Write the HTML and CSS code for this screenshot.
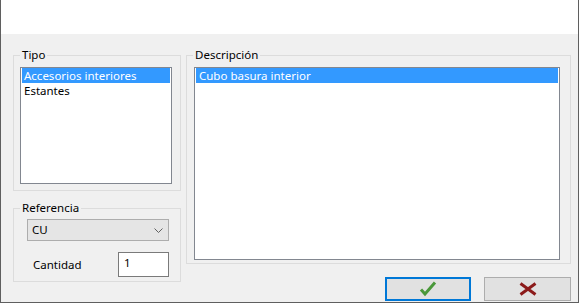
FILE: index.html
```html
<!DOCTYPE html>
<html>
<head>
<meta charset="utf-8">
<link rel="stylesheet" href="styles.css">
</head>
<body>
<div class="window">
  <div class="titlebar"></div>
  <div class="content">
    <div class="col-left">
      <div class="group group-tipo">
        <div class="group-title">Tipo</div>
        <div class="listbox list-tipo">
          <div class="item selected">Accesorios interiores</div>
          <div class="item">Estantes</div>
        </div>
      </div>
      <div class="group group-ref">
        <div class="group-title">Referencia</div>
        <div class="combo">
          <span class="combo-text">CU</span>
          <svg class="chevron" width="9" height="5" viewBox="0 0 9 5"><path d="M0.5 0.5 L4.5 4.5 L8.5 0.5" fill="none" stroke="#606060" stroke-width="1"/></svg>
        </div>
        <div class="qty-row">
          <span class="qty-label">Cantidad</span>
          <div class="textbox">1</div>
        </div>
      </div>
    </div>
    <div class="col-right">
      <div class="group group-desc">
        <div class="group-title">Descripción</div>
        <div class="listbox list-desc">
          <div class="item selected">Cubo basura interior</div>
        </div>
      </div>
      <div class="buttons">
        <button class="btn btn-ok" type="button">
          <svg width="18" height="16" viewBox="0 0 18 16"><path d="M2 8.5 L6 13 L16 1.5" fill="none" stroke="#4a983a" stroke-width="3"/></svg>
        </button>
        <button class="btn btn-cancel" type="button">
          <svg width="18" height="14" viewBox="0 0 18 14"><path d="M1.5 1.5 L16.5 12.5 M16.5 1.5 L1.5 12.5" fill="none" stroke="#8c1b1b" stroke-width="3"/></svg>
        </button>
      </div>
    </div>
  </div>
</div>
</body>
</html>
```
FILE: styles.css
```css
* { box-sizing: border-box; }
html, body { margin: 0; padding: 0; background: #ffffff; }
body {
  font-family: "Noto Sans", "Open Sans", "DejaVu Sans", sans-serif;
  font-size: 11.5px;
  color: #000;
}
.window {
  width: 579px;
  height: 303px;
  border: 1px solid #5f5f5f;
  border-top: none;
  background: #f0f0f0;
  display: flex;
  flex-direction: column;
}
.titlebar {
  height: 34px;
  background: #ffffff;
  flex: none;
}
.content {
  display: flex;
  gap: 5px;
  padding: 21px 7px 0 12px;
}
.col-left {
  width: 168px;
  display: flex;
  flex-direction: column;
  gap: 17px;
}
.col-right {
  width: 385px;
  display: flex;
  flex-direction: column;
}
.group {
  border: 1px solid #dcdcdc;
}
.group-title {
  margin: -9px 0 0 6px;
  padding: 0 2px 0 2px;
  height: 16px;
  line-height: 16px;
  background: #f0f0f0;
  width: fit-content;
}
.group-tipo {
  height: 136px;
  padding: 0 0 6px 0;
}
.listbox {
  background: #fff;
  border: 1px solid #828790;
  padding: 0 1px;
  margin-top: 4px;
}
.list-tipo {
  width: 152px;
  height: 117px;
  margin-left: 6px;
}
.item {
  height: 15px;
  line-height: 15px;
  padding-left: 2px;
  white-space: nowrap;
}
.item.selected {
  background: #3399ff;
  color: #fff;
}
.group-ref {
  height: 74px;
  padding: 0 11px 4px 13px;
  padding-left: 0;
}
.combo {
  margin: 3px 0 0 13px;
  width: 142px;
  height: 22px;
  background: #e5e5e5;
  border: 1px solid #adadad;
  display: flex;
  align-items: center;
  justify-content: space-between;
  padding: 0 5px 0 4px;
}
.combo-text { line-height: 16px; }
.chevron { display: block; margin-top: 1px; }
.qty-row {
  margin: 11px 0 0 13px;
  width: 142px;
  display: flex;
  align-items: center;
  padding-left: 6px;
}
.qty-label { line-height: 16px; }
.textbox {
  margin-left: auto;
  width: 51px;
  height: 25px;
  background: #fff;
  border: 1px solid #7a7a7a;
  padding: 2px 0 0 5px;
  line-height: 16px;
}
.group-desc {
  height: 209px;
  padding: 0 0 3px 0;
}
.list-desc {
  width: 366px;
  height: 193px;
  margin-left: 7px;
}
.list-desc .item { padding-left: 3px; }
.buttons {
  margin-top: 13px;
  display: flex;
  justify-content: flex-end;
  gap: 13px;
}
.btn {
  height: 24px;
  background: #e1e1e1;
  border: 1px solid #adadad;
  display: flex;
  align-items: center;
  justify-content: center;
  padding: 0;
  margin: 0;
}
.btn svg { display: block; }
.btn-ok {
  width: 86px;
  border: 2px solid #0078d7;
}
.btn-cancel {
  width: 87px;
}
```
